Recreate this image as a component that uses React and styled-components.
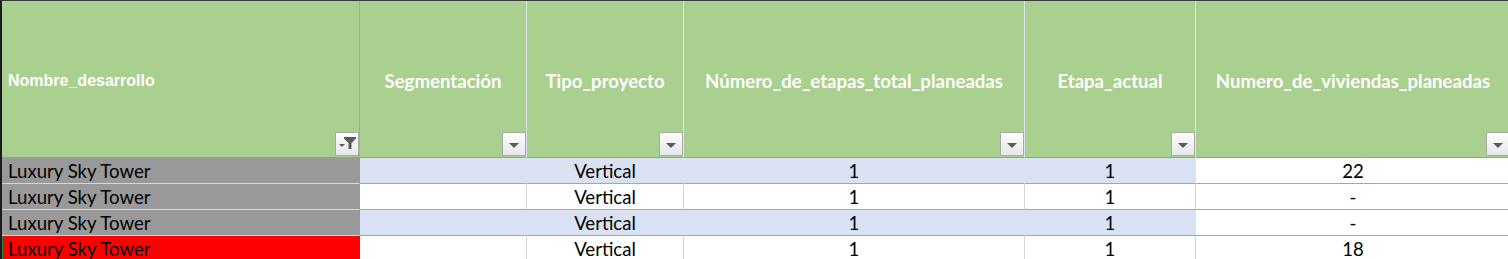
import React from 'react';
import styled, { createGlobalStyle } from 'styled-components';

const Global = createGlobalStyle`
  html, body { margin: 0; padding: 0; background: #ffffff; }
  body { width: 1508px; height: 259px; overflow: hidden; }
`;

const Sheet = styled.div`
  width: 1508px;
  height: 259px;
  overflow: hidden;
  box-sizing: border-box;
  border-top: 1px solid #3a3a3a;
  border-left: 2px solid #1c1c1c;
`;

const Grid = styled.div`
  display: grid;
  grid-template-columns: 358px 167px 157px 341px 171px 315px;
  grid-template-rows: 157px repeat(4, 26px);
`;

const HeadCell = styled.div`
  box-sizing: border-box;
  display: grid;
  grid-template: 1fr / 1fr;
  background: #a9d08e;
  border-right: 1px solid ${(p) => (p.$first ? '#a3aba0' : '#d6e6ef')};
  border-bottom: 1px solid #9c9c9c;
  color: #ffffff;
  overflow: hidden;
`;

const HeadLabel = styled.div`
  grid-area: 1 / 1;
  align-self: center;
  justify-self: ${(p) => (p.$left ? 'start' : 'center')};
  padding: ${(p) => (p.$left ? '3px 0 0 6px' : '3px 0 0 0')};
  font-family: ${(p) => (p.$arial ? '"Liberation Sans", Arial, sans-serif' : 'Lato, "Noto Sans", sans-serif')};
  font-weight: 700;
  font-size: ${(p) => (p.$arial ? '16px' : '18.6px')};
  white-space: nowrap;
`;

const FilterButton = styled.div`
  grid-area: 1 / 1;
  align-self: end;
  justify-self: end;
  box-sizing: border-box;
  width: 24px;
  height: 24px;
  margin: 0 0 1px 0;
  border: 1px solid #a9a9a9;
  background: linear-gradient(#fdfdfd, #e6e7ec);
  display: flex;
  align-items: center;
  justify-content: center;
`;

const Arrow = styled.span`
  width: 0;
  height: 0;
  margin-top: 2px;
  border-left: 5px solid transparent;
  border-right: 5px solid transparent;
  border-top: 5px solid #5a5a5a;
`;

const BG = {
  gray: '#999999',
  red: '#ff0000',
  band: '#d9e1f2',
  white: '#ffffff',
};

const Cell = styled.div`
  box-sizing: border-box;
  background: ${(p) => BG[p.$bg]};
  border-right: 1px solid ${(p) => (p.$bg === 'white' ? '#d4d4d4' : BG[p.$bg])};
  border-bottom: 1px solid ${(p) => (p.$bg === 'gray' || p.$bg === 'red' ? '#cfd6e6' : '#8ea9db')};
  box-shadow: ${(p) => (p.$mark ? 'inset 1px 0 0 #2f7d45' : 'none')};
  display: flex;
  align-items: center;
  justify-content: ${(p) => (p.$align === 'center' ? 'center' : 'flex-start')};
  padding: 1px ${(p) => (p.$align === 'center' ? '0' : '6px')} 0;
  font-family: Lato, "Noto Sans", sans-serif;
  font-size: 18.6px;
  color: #000000;
  white-space: nowrap;
  overflow: hidden;
`;

function FunnelIcon() {
  return (
    <svg width="22" height="22" viewBox="0 0 22 22">
      <path d="M8 4h12v1.5l-4.5 4.5v6h-3v-6L8 5.5z" fill="#5a5a5a" />
      <path d="M3 11h6l-3 3z" fill="#5a5a5a" />
    </svg>
  );
}

const headers = [
  { label: 'Nombre_desarrollo', left: true, arial: true, filtered: true },
  { label: 'Segmentación' },
  { label: 'Tipo_proyecto' },
  { label: 'Número_de_etapas_total_planeadas' },
  { label: 'Etapa_actual' },
  { label: 'Numero_de_viviendas_planeadas' },
];

const rows = [
  { first: 'gray', band: true, last: '22' },
  { first: 'gray', band: false, last: '-' },
  { first: 'gray', band: true, last: '-' },
  { first: 'red', band: false, last: '18', mark: true },
];

export default function App() {
  return (
    <>
      <Global />
      <Sheet>
        <Grid>
          {headers.map((h, i) => (
            <HeadCell key={h.label} $first={i === 0}>
              <HeadLabel $left={h.left} $arial={h.arial}>{h.label}</HeadLabel>
              <FilterButton>
                {h.filtered ? <FunnelIcon /> : <Arrow />}
              </FilterButton>
            </HeadCell>
          ))}
          {rows.map((r, i) => {
            const mid = r.band ? 'band' : 'white';
            return (
              <React.Fragment key={i}>
                <Cell $bg={r.first} $mark={r.mark}>Luxury Sky Tower</Cell>
                <Cell $bg={mid} />
                <Cell $bg={mid} $align="center">Vertical</Cell>
                <Cell $bg={mid} $align="center">1</Cell>
                <Cell $bg={mid} $align="center">1</Cell>
                <Cell $bg="white" $align="center">{r.last}</Cell>
              </React.Fragment>
            );
          })}
        </Grid>
      </Sheet>
    </>
  );
}
